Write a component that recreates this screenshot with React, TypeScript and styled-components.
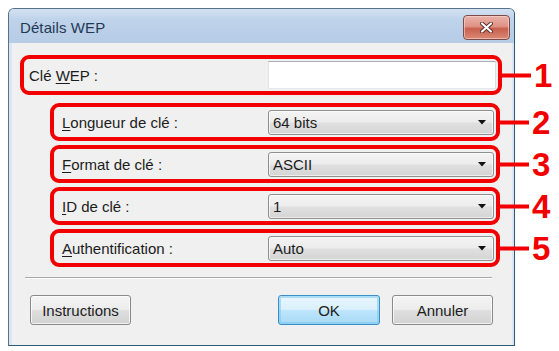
import React from "react";
import styled, { createGlobalStyle } from "styled-components";

const GlobalStyle = createGlobalStyle`
  html, body { margin: 0; padding: 0; background: #ffffff; }
  body { font-family: "Liberation Sans", Arial, sans-serif; }
`;

const Page = styled.div`
  width: 559px;
  height: 351px;
  box-sizing: border-box;
  padding: 8px 0 0 8px;
  background: #ffffff;
  overflow: hidden;
`;

const Window = styled.div`
  width: 507px;
  height: 338px;
  box-sizing: border-box;
  border: 1px solid #56728a;
  border-right-color: #2d5b6f;
  border-bottom-color: #2d5b6f;
  border-radius: 6px 6px 0 0;
  background: #dbe6f2;
  display: flex;
  flex-direction: column;
`;

const TitleBar = styled.div`
  height: 34px;
  flex: 0 0 34px;
  box-sizing: border-box;
  padding: 3px 4px 0 11px;
  display: flex;
  align-items: center;
  justify-content: space-between;
  border-radius: 5px 5px 0 0;
  background: linear-gradient(#d3e2f2 0%, #bfd3ea 30%, #b6cbe5 100%);
`;

const Title = styled.span`
  font-size: 15px;
  color: #1f3856;
  letter-spacing: 0.1px;
`;

const CloseButton = styled.div`
  width: 47px;
  height: 25px;
  box-sizing: border-box;
  border: 1px solid #7d4b47;
  border-radius: 4px;
  background: linear-gradient(#eab3aa 0%, #df9284 45%, #c95f4d 55%, #d98a76 100%);
  box-shadow: inset 0 0 0 1px rgba(255, 220, 215, 0.55);
  display: flex;
  align-items: center;
  justify-content: center;
`;

const Client = styled.div`
  flex: 1;
  margin: 0 2px 0 3px;
  padding-top: 12px;
  background: #f0f0f0;
  display: flex;
  flex-direction: column;
`;

const Field = styled.div<{ $first?: boolean }>`
  position: relative;
  display: flex;
  align-items: center;
  box-sizing: border-box;
  height: ${(p) => (p.$first ? 40 : 38)}px;
  margin: ${(p) => (p.$first ? "0 10px 8px 8px" : "0 12px 4px 38px")};
  padding: ${(p) => (p.$first ? "0 2px 0 5px" : "0 2px 0 8px")};
  border: 4px solid #f20000;
  border-radius: 9px;
`;

const Label = styled.span`
  flex: 1;
  font-size: 15px;
  color: #1c1c1c;
  white-space: nowrap;
  u {
    text-decoration-thickness: 1px;
    text-underline-offset: 2px;
  }
`;

const TextInput = styled.div`
  width: 228px;
  height: 28px;
  box-sizing: border-box;
  border: 1px solid #abadb3;
  border-color: #abadb3 #dbdfe6 #e3e9ef #e2e3ea;
  background: #ffffff;
`;

const Combo = styled.div`
  width: 226px;
  height: 25px;
  box-sizing: border-box;
  border: 1px solid #8f8f8f;
  border-radius: 3px;
  padding: 0 7px 0 4px;
  display: flex;
  align-items: center;
  justify-content: space-between;
  font-size: 15px;
  color: #1c1c1c;
  background: linear-gradient(#f4f4f4 0%, #ececec 48%, #e0e0e0 52%, #d4d4d4 100%);
  box-shadow: inset 0 0 0 1px rgba(255, 255, 255, 0.6);
`;

const Callout = styled.div`
  position: absolute;
  left: calc(100% + 4px);
  top: 50%;
  transform: translateY(-50%);
  display: flex;
  align-items: center;
  gap: 3px;
`;

const Connector = styled.div`
  width: 29px;
  height: 4px;
  background: #f20000;
`;

const Num = styled.span`
  font-family: "Liberation Sans", Arial, sans-serif;
  font-weight: bold;
  font-size: 33px;
  line-height: 1;
  color: #f20000;
`;

const Separator = styled.div`
  margin: 6px 20px 0 13px;
  height: 0;
  border-top: 1px solid #a8a8a8;
  border-bottom: 1px solid #ffffff;
`;

const ButtonRow = styled.div`
  display: flex;
  align-items: center;
  margin-top: 16px;
  padding: 0 19px 0 18px;
  gap: 12px;
`;

const Spacer = styled.div`
  flex: 1;
`;

const Button = styled.div<{ $default?: boolean; $w: number }>`
  width: ${(p) => p.$w}px;
  height: 30px;
  box-sizing: border-box;
  border: 1px solid ${(p) => (p.$default ? "#3c8fc4" : "#8a8a8a")};
  border-radius: 3px;
  display: flex;
  align-items: center;
  justify-content: center;
  font-size: 15px;
  color: #1c1c1c;
  background: ${(p) =>
    p.$default
      ? "linear-gradient(#eaf6fd 0%, #d9f0fc 48%, #bee6fd 52%, #a7d9f5 100%)"
      : "linear-gradient(#f4f4f4 0%, #ececec 48%, #dedede 52%, #d2d2d2 100%)"};
  box-shadow: ${(p) =>
    p.$default
      ? "inset 0 0 0 2px rgba(120, 200, 240, 0.55)"
      : "inset 0 0 0 1px rgba(255, 255, 255, 0.7)"};
`;

const CloseX = () => (
  <svg width="13" height="11" viewBox="0 0 13 11">
    <path d="M2 1.5 L11 9.5 M11 1.5 L2 9.5" stroke="#5a2a26" strokeWidth="4" strokeLinecap="round" />
    <path d="M2 1.5 L11 9.5 M11 1.5 L2 9.5" stroke="#ffffff" strokeWidth="2.2" strokeLinecap="round" />
  </svg>
);

const Arrow = () => (
  <svg width="8" height="5" viewBox="0 0 8 5">
    <path d="M0 0 L8 0 L4 4.5 Z" fill="#111" />
  </svg>
);

const combos = [
  { n: 2, mn: "L", rest: "ongueur de clé :", value: "64 bits" },
  { n: 3, mn: "F", rest: "ormat de clé :", value: "ASCII" },
  { n: 4, mn: "I", rest: "D de clé :", value: "1" },
  { n: 5, mn: "A", rest: "uthentification :", value: "Auto" },
];

export default function App() {
  return (
    <Page>
      <GlobalStyle />
      <Window>
        <TitleBar>
          <Title>Détails WEP</Title>
          <CloseButton>
            <CloseX />
          </CloseButton>
        </TitleBar>
        <Client>
          <Field $first>
            <Label>
              Clé <u>W</u>EP :
            </Label>
            <TextInput />
            <Callout>
              <Connector />
              <Num>1</Num>
            </Callout>
          </Field>
          {combos.map((c) => (
            <Field key={c.n}>
              <Label>
                <u>{c.mn}</u>
                {c.rest}
              </Label>
              <Combo>
                <span>{c.value}</span>
                <Arrow />
              </Combo>
              <Callout>
                <Connector />
                <Num>{c.n}</Num>
              </Callout>
            </Field>
          ))}
          <Separator />
          <ButtonRow>
            <Button $w={101}>Instructions</Button>
            <Spacer />
            <Button $w={102} $default>
              OK
            </Button>
            <Button $w={101}>Annuler</Button>
          </ButtonRow>
        </Client>
      </Window>
    </Page>
  );
}
